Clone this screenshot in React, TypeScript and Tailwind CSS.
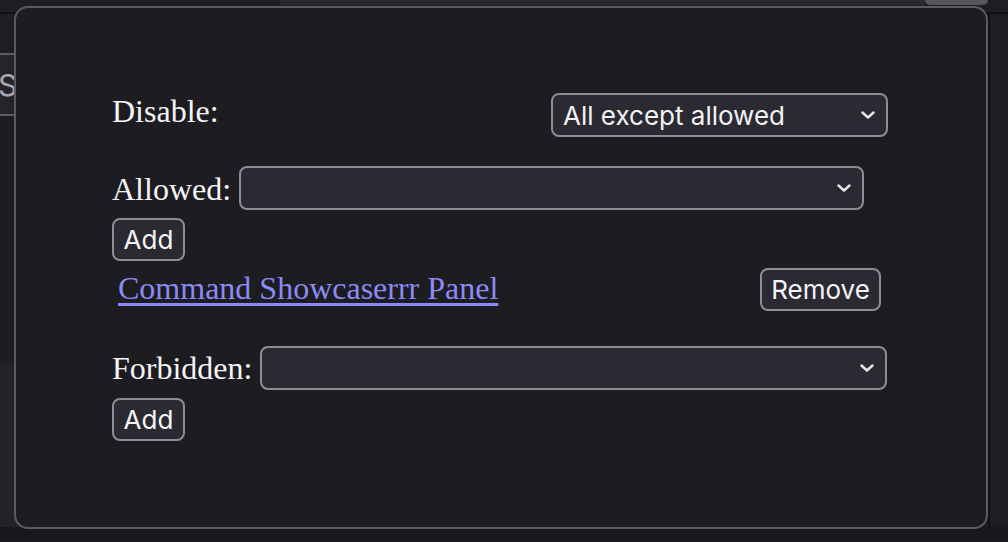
import React from 'react'

const serif = { fontFamily: '"Liberation Serif", "Times New Roman", serif' }
const sans = { fontFamily: 'Inter, "Noto Sans", sans-serif' }

function Chevron() {
    return (
        <svg width="14" height="8" viewBox="0 0 14 8" className="shrink-0">
            <path d="M1.5 1.5 L7 6.5 L12.5 1.5" fill="none" stroke="#e8e8ec" strokeWidth="2.4" strokeLinecap="round" strokeLinejoin="round" />
        </svg>
    )
}

function Select({ value, width }: { value?: string; width: string }) {
    return (
        <div
            className={`flex items-center justify-between h-[44px] ${width} pl-[10px] pr-[11px] rounded-[8px] border-2 border-[#8e8d95] bg-[#2b2a33] text-[#f2f2f4] text-[26px] leading-none`}
            style={sans}
        >
            <span className="mt-[2px]">{value}</span>
            <Chevron />
        </div>
    )
}

function Button({ label, width }: { label: string; width: string }) {
    return (
        <button
            className={`flex items-center justify-center h-[43px] ${width} rounded-[8px] border-2 border-[#8e8d95] bg-[#2b2a33] text-[#f4f4f6] text-[26px] leading-none`}
            style={sans}
        >
            <span className="mt-[1px]">{label}</span>
        </button>
    )
}

export default function App() {
    return (
        <div className="relative w-[1008px] h-[542px] overflow-hidden bg-[#1c1b20]">
            {/* page behind the dialog */}
            <div className="flex h-[14px] bg-[#1f1e23] border-b-2 border-[#111014]">
                <div className="w-[280px]" />
                <div className="w-[645px] h-[5px] bg-[#2a2930]" />
                <div className="w-[63px] h-[5px] rounded-b-[6px] bg-[#57565e]" />
            </div>
            <div className="flex h-[513px]">
                <div className="flex flex-col w-[300px]">
                    <div className="h-[39px] bg-[#1e1d22]" />
                    <div className="flex items-center h-[63px] border-y-2 border-[#5d5c64] bg-[#25242a] text-[#a9a8ae] text-[30px] overflow-hidden" style={sans}>
                        <span className="-ml-[2px] mt-[2px]">Scope</span>
                    </div>
                    <div className="h-[247px] bg-[#1d1c21]" />
                    <div className="flex-1 bg-[#232227]" />
                </div>
                <div className="flex-1" />
                <div className="w-[20px] border-l-2 border-[#111014] bg-[#1e1d22]" />
            </div>
            <div className="h-[13px] bg-[#18171c]" />

            {/* dialog */}
            <div className="absolute left-[14px] top-[6px] w-[974px] h-[523px] rounded-[14px] border-2 border-[#5b5a62] bg-[#1d1c21] pl-[96px] pr-[98px] pt-[83px] text-[#f4f4f6]" style={serif}>
                <div className="flex items-start justify-between">
                    <span className="text-[32px] leading-[36px] mt-[2px]">Disable:</span>
                    <div className="mt-[2px]">
                        <Select value="All except allowed" width="w-[337px]" />
                    </div>
                </div>

                <div className="flex items-start mt-[29px]">
                    <span className="text-[32px] leading-[36px] mt-[5px] mr-[8px]">Allowed:</span>
                    <Select width="w-[625px]" />
                </div>
                <div className="mt-[8px]">
                    <Button label="Add" width="w-[73px]" />
                </div>

                <div className="flex items-start justify-between mt-[7px] pl-[6px] pr-[7px]">
                    <a href="#" className="text-[32px] leading-[36px] mt-[2px] text-[#8d8af5] underline underline-offset-[4px]">
                        Command Showcaserrr Panel
                    </a>
                    <Button label="Remove" width="w-[121px]" />
                </div>

                <div className="flex items-start mt-[35px]">
                    <span className="text-[32px] leading-[36px] mt-[4px] mr-[8px]">Forbidden:</span>
                    <Select width="w-[627px]" />
                </div>
                <div className="mt-[8px]">
                    <Button label="Add" width="w-[73px]" />
                </div>
            </div>
        </div>
    )
}
